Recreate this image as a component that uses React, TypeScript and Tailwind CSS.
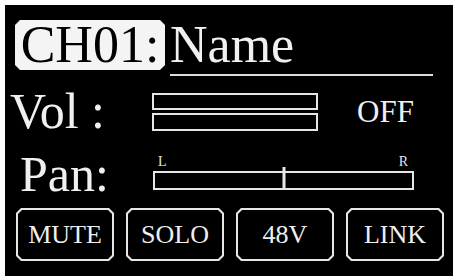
import React from 'react';

const chamfer =
  '[clip-path:polygon(5px_0,calc(100%_-_5px)_0,100%_5px,100%_calc(100%_-_5px),calc(100%_-_5px)_100%,5px_100%,0_calc(100%_-_5px),0_5px)]';
const chamferInner =
  '[clip-path:polygon(4px_0,calc(100%_-_4px)_0,100%_4px,100%_calc(100%_-_4px),calc(100%_-_4px)_100%,4px_100%,0_calc(100%_-_4px),0_4px)]';

const BUTTONS = ['MUTE', 'SOLO', '48V', 'LINK'];

const ToggleButton: React.FC<{ label: string }> = ({ label }) => (
  <div className={`w-[98px] h-[53px] bg-[#e6e6e6] p-[2px] ${chamfer}`}>
    <div
      className={`w-full h-full bg-black flex items-center justify-center text-[26px] leading-none text-[#eeeeee] ${chamferInner}`}
    >
      {label}
    </div>
  </div>
);

export default function App() {
  return (
    <div className="w-[453px] h-[276px] bg-white pl-[5px] pt-[5px] font-['Liberation_Serif',serif]">
      <div className="w-full h-full bg-black flex flex-col overflow-hidden">
        {/* チャンネル名 */}
        <div className="flex mt-[15px] ml-[10px]">
          <div
            className={`w-[150px] h-[50px] bg-[#f4f4f4] rounded-[4px] flex items-center justify-center text-[52px] leading-[50px] text-black ${chamfer}`}
          >
            CH01:
          </div>
          <div className="flex flex-col ml-[5px] w-[263px]">
            <div className="h-[50px] text-[52px] leading-[50px] text-[#f0f0f0]">Name</div>
            <div className="mt-[4px] h-[2px] bg-[#dcdcdc]" />
          </div>
        </div>

        {/* ボリューム */}
        <div className="flex h-[50px] mt-[10px] pl-[5px]">
          <div className="w-[142px] text-[50px] leading-[50px] text-[#f0f0f0]">Vol :</div>
          <div className="w-[166px] mt-[7px] flex flex-col gap-[3px]">
            <div className="h-[17px] border-2 border-[#e6e6e6]" />
            <div className="h-[18px] border-2 border-[#e6e6e6]" />
          </div>
          <div className="ml-[39px] mt-[11px] text-[31px] leading-[30px] text-[#f0f0f0]">OFF</div>
        </div>

        {/* パン */}
        <div className="flex h-[50px] mt-[13px] pl-[15px]">
          <div className="w-[133px] text-[50px] leading-[50px] text-[#f0f0f0]">Pan:</div>
          <div className="w-[261px] flex flex-col">
            <div className="mt-[6px] h-[14px] flex justify-between pl-[5px] pr-[6px] text-[14px] leading-[14px] text-[#e6e6e6]">
              <span>L</span>
              <span>R</span>
            </div>
            <div className="relative mt-[2px] h-[19px] border-2 border-[#e6e6e6]">
              <div className="absolute left-1/2 -translate-x-1/2 -top-[6px] w-[3px] h-[21px] bg-[#e6e6e6]" />
            </div>
          </div>
        </div>

        {/* ボタン */}
        <div className="flex gap-[12px] mt-[9px] ml-[11px]">
          {BUTTONS.map((b) => (
            <ToggleButton key={b} label={b} />
          ))}
        </div>
      </div>
    </div>
  );
}
